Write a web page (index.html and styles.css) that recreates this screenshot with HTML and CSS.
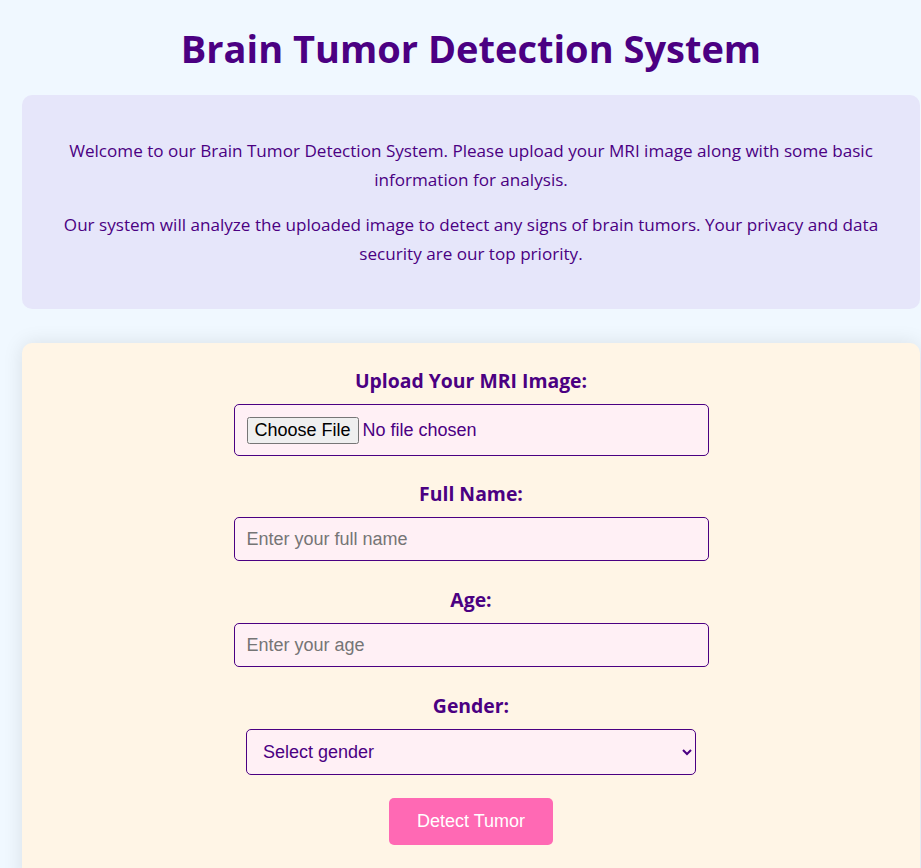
FILE: index.html
```html
<!DOCTYPE html>
<html lang="en">
<head>
<meta charset="utf-8">
<title>Brain Tumor Detection System</title>
<link rel="stylesheet" href="styles.css">
</head>
<body>
<div class="container">
  <h1 class="title">Brain Tumor Detection System</h1>
  <section class="info-card">
    <p>Welcome to our Brain Tumor Detection System. Please upload your MRI image along with some basic information for analysis.</p>
    <p>Our system will analyze the uploaded image to detect any signs of brain tumors. Your privacy and data security are our top priority.</p>
  </section>
  <section class="form-card">
    <form class="form">
      <label class="label" for="mri">Upload Your MRI Image:</label>
      <input class="field file-field" type="file" id="mri">
      <label class="label" for="name">Full Name:</label>
      <input class="field text-field" type="text" id="name" placeholder="Enter your full name">
      <label class="label" for="age">Age:</label>
      <input class="field text-field" type="number" id="age" placeholder="Enter your age">
      <label class="label" for="gender">Gender:</label>
      <select class="field select-field" id="gender">
        <option>Select gender</option>
        <option>Male</option>
        <option>Female</option>
        <option>Other</option>
      </select>
      <button class="submit" type="button">Detect Tumor</button>
    </form>
  </section>
</div>
</body>
</html>
```

FILE: styles.css
```css
html, body {
  margin: 0;
  padding: 0;
  background: #f0f8ff;
}
body {
  font-family: "Open Sans", "Noto Sans", sans-serif;
  color: #4b0082;
  overflow: hidden;
}
.container {
  width: 898px;
  margin-left: 22px;
}
.title {
  margin: 20px 0 19px;
  line-height: 56px;
  font-size: 38px;
  font-weight: 700;
  text-align: center;
  color: #4b0082;
}
.info-card {
  background: #e6e6fa;
  border-radius: 10px;
  padding: 25px;
  text-align: center;
}
.info-card p {
  margin: 16px 0;
  font-size: 17.1px;
  line-height: 29px;
}
.form-card {
  margin-top: 34px;
  background: #fff5e6;
  border-radius: 10px;
  padding: 26px 25px 40px;
  box-shadow: 0 0 20px rgba(0, 0, 0, 0.1);
}
.form {
  width: 475px;
  margin: 0 auto;
}
.label {
  display: block;
  text-align: center;
  font-weight: 700;
  font-size: 19.4px;
  line-height: 24px;
  margin-bottom: 11px;
}
.field {
  display: block;
  box-sizing: border-box;
  width: 100%;
  border: 1px solid #4b0082;
  border-radius: 5px;
  background: #fff0f5;
  font-family: "Liberation Sans", Arial, sans-serif;
  font-size: 18px;
  color: #4b0082;
}
.file-field {
  padding: 12px 12px 11px;
  margin-bottom: 26px;
}
.file-field::file-selector-button {
  font-family: "Liberation Sans", Arial, sans-serif;
  font-size: 18px;
}
.text-field {
  padding: 10px 12px;
  line-height: 22px;
  height: 44px;
  margin-bottom: 27px;
}
.text-field::placeholder {
  color: #757575;
}
.select-field {
  width: 450px;
  height: 46px;
  margin: 0 auto 23px;
  padding: 0 12px;
}
.submit {
  display: block;
  margin: 0 auto;
  padding: 13px 28px;
  border: none;
  border-radius: 5px;
  background: #ff69b4;
  color: #ffffff;
  font-family: "Liberation Sans", Arial, sans-serif;
  font-size: 18px;
  line-height: 21px;
}
```
